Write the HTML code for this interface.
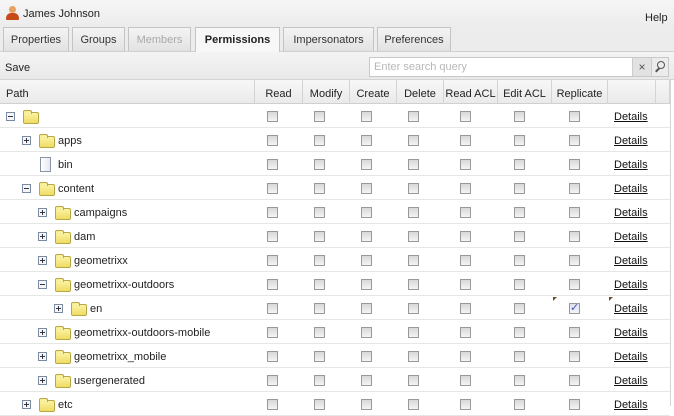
<!DOCTYPE html>
<html><head><meta charset="utf-8">
<style>
*{box-sizing:border-box;margin:0;padding:0}
body{width:674px;height:406px;overflow:hidden;background:#fff;font-family:"Liberation Sans",sans-serif;font-size:11px;color:#222;position:relative}
.a{position:absolute}
#title{left:0;top:0;width:674px;height:27px;background:linear-gradient(#f6f6f6,#ececec)}
#tabs{left:0;top:27px;width:674px;height:25px;background:#ececec;border-bottom:1px solid #cfcfcf}
.tab{position:absolute;top:0;height:24px;border:1px solid #c4c4c4;border-bottom:none;background:linear-gradient(#f4f4f4,#e2e2e2);text-align:center;line-height:24px;font-size:11px;color:#333}
.tab.on{background:#f7f7f7;font-weight:bold;height:25px;color:#222}
#tool{left:0;top:52px;width:674px;height:28px;background:linear-gradient(#f4f4f4,#e9e9e9);border-bottom:1px solid #d4d4d4}
#head{left:0;top:80px;width:670px;height:24px;background:linear-gradient(#f7f7f7,#eaeaea);border-bottom:1px solid #d0d0d0}
.hc{position:absolute;top:0;height:24px;border-left:1px solid #d4d4d4;text-align:center;line-height:28px;font-size:11px}
.row{position:absolute;left:0;width:670px;height:24px;border-bottom:1px solid #e6e6e6}
.cb{position:absolute;top:7px;width:11px;height:11px;border:1px solid #999;background:linear-gradient(#d8d8d8,#f4f4f4)}
.det{position:absolute;left:614px;top:7px;text-decoration:underline;color:#111}
.lbl{position:absolute;top:7px}
.tg{position:absolute;top:8px;width:9px;height:9px;border:1px solid #7a8aa0;background:#f4f6fa}
.tg:before{content:"";position:absolute;left:1px;top:3px;width:5px;height:1px;background:#334}
.tg.p:after{content:"";position:absolute;left:3px;top:1px;width:1px;height:5px;background:#334}
.fd{position:absolute;top:8px;width:16px;height:12px;border:1px solid #b9a646;border-radius:2px;background:linear-gradient(#fbf3a6,#efdc62)}
.fd:before{content:"";position:absolute;left:-1px;top:-3px;width:7px;height:3px;border:1px solid #b9a646;border-bottom:none;border-radius:2px 2px 0 0;background:#f9ef9a}
.fl{position:absolute;top:5px;width:11px;height:15px;border:1px solid #8a93a8;background:linear-gradient(90deg,#fff,#e6e9f0)}
</style></head><body>
<div id="title" class="a">
 <div class="a" style="left:6px;top:6px;width:12px;height:14px">
  <div class="a" style="left:3px;top:0;width:7px;height:7px;border-radius:50%;background:#e8a060"></div>
  <div class="a" style="left:0;top:7px;width:13px;height:7px;border-radius:5px 5px 1px 1px;background:#c84a1a"></div>
 </div>
 <div class="a" style="left:23px;top:8px;font-size:11px">James Johnson</div>
 <div class="a" style="left:645px;top:12px;font-size:11px">Help</div>
</div>
<div id="tabs" class="a">
 <div class="tab" style="left:3px;width:66px">Properties</div>
 <div class="tab" style="left:72px;width:53px">Groups</div>
 <div class="tab" style="left:128px;width:63px;color:#aaa">Members</div>
 <div class="tab on" style="left:195px;width:85px">Permissions</div>
 <div class="tab" style="left:283px;width:91px">Impersonators</div>
 <div class="tab" style="left:377px;width:74px">Preferences</div>
</div>
<div id="tool" class="a">
 <div class="a" style="left:5px;top:10px">Save</div>
 <div class="a" style="left:369px;top:5px;width:300px;height:20px;border:1px solid #c8c8c8;background:#fff"></div>
 <div class="a" style="left:374px;top:9px;color:#b8b8b8">Enter search query</div>
 <div class="a" style="left:632px;top:6px;width:19px;height:18px;background:#e2e2e2;border-left:1px solid #ccc;text-align:center;line-height:18px;color:#555;font-size:12px">×</div>
 <div class="a" style="left:651px;top:6px;width:17px;height:18px;background:#ececec;border-left:1px solid #ccc">
  <div class="a" style="left:5px;top:3px;width:8px;height:8px;border:1.5px solid #555;border-radius:50%"></div>
  <div class="a" style="left:3px;top:11px;width:5px;height:2px;background:#555;transform:rotate(-45deg)"></div>
 </div>
</div>
<div id="head" class="a">
 <div class="a" style="left:6px;top:8px">Path</div>
 <div class="hc" style="left:254px;width:48px">Read</div>
 <div class="hc" style="left:302px;width:47px">Modify</div>
 <div class="hc" style="left:349px;width:47px">Create</div>
 <div class="hc" style="left:396px;width:47px">Delete</div>
 <div class="hc" style="left:443px;width:54px">Read ACL</div>
 <div class="hc" style="left:497px;width:54px">Edit ACL</div>
 <div class="hc" style="left:551px;width:56px">Replicate</div>
 <div class="hc" style="left:607px;width:48px"></div>
 <div class="hc" style="left:655px;width:15px;border-right:1px solid #d4d4d4"></div>
</div>
<div class="a" style="left:670px;top:80px;width:1px;height:326px;background:#d4d4d4"></div>

<div class="row" style="top:104px"><div class="tg" style="left:6px"></div><div class="fd" style="left:23px"></div>
<div class="cb" style="left:267px"></div><div class="cb" style="left:314px"></div><div class="cb" style="left:361px"></div><div class="cb" style="left:408px"></div><div class="cb" style="left:460px"></div><div class="cb" style="left:514px"></div><div class="cb" style="left:569px"></div><div class="det">Details</div></div>

<div class="row" style="top:128px"><div class="tg p" style="left:22px"></div><div class="fd" style="left:39px"></div><div class="lbl" style="left:58px">apps</div>
<div class="cb" style="left:267px"></div><div class="cb" style="left:314px"></div><div class="cb" style="left:361px"></div><div class="cb" style="left:408px"></div><div class="cb" style="left:460px"></div><div class="cb" style="left:514px"></div><div class="cb" style="left:569px"></div><div class="det">Details</div></div>

<div class="row" style="top:152px"><div class="fl" style="left:40px"></div><div class="lbl" style="left:58px">bin</div>
<div class="cb" style="left:267px"></div><div class="cb" style="left:314px"></div><div class="cb" style="left:361px"></div><div class="cb" style="left:408px"></div><div class="cb" style="left:460px"></div><div class="cb" style="left:514px"></div><div class="cb" style="left:569px"></div><div class="det">Details</div></div>

<div class="row" style="top:176px"><div class="tg" style="left:22px"></div><div class="fd" style="left:39px"></div><div class="lbl" style="left:58px">content</div>
<div class="cb" style="left:267px"></div><div class="cb" style="left:314px"></div><div class="cb" style="left:361px"></div><div class="cb" style="left:408px"></div><div class="cb" style="left:460px"></div><div class="cb" style="left:514px"></div><div class="cb" style="left:569px"></div><div class="det">Details</div></div>

<div class="row" style="top:200px"><div class="tg p" style="left:38px"></div><div class="fd" style="left:55px"></div><div class="lbl" style="left:74px">campaigns</div>
<div class="cb" style="left:267px"></div><div class="cb" style="left:314px"></div><div class="cb" style="left:361px"></div><div class="cb" style="left:408px"></div><div class="cb" style="left:460px"></div><div class="cb" style="left:514px"></div><div class="cb" style="left:569px"></div><div class="det">Details</div></div>

<div class="row" style="top:224px"><div class="tg p" style="left:38px"></div><div class="fd" style="left:55px"></div><div class="lbl" style="left:74px">dam</div>
<div class="cb" style="left:267px"></div><div class="cb" style="left:314px"></div><div class="cb" style="left:361px"></div><div class="cb" style="left:408px"></div><div class="cb" style="left:460px"></div><div class="cb" style="left:514px"></div><div class="cb" style="left:569px"></div><div class="det">Details</div></div>

<div class="row" style="top:248px"><div class="tg p" style="left:38px"></div><div class="fd" style="left:55px"></div><div class="lbl" style="left:74px">geometrixx</div>
<div class="cb" style="left:267px"></div><div class="cb" style="left:314px"></div><div class="cb" style="left:361px"></div><div class="cb" style="left:408px"></div><div class="cb" style="left:460px"></div><div class="cb" style="left:514px"></div><div class="cb" style="left:569px"></div><div class="det">Details</div></div>

<div class="row" style="top:272px"><div class="tg" style="left:38px"></div><div class="fd" style="left:55px"></div><div class="lbl" style="left:74px">geometrixx-outdoors</div>
<div class="cb" style="left:267px"></div><div class="cb" style="left:314px"></div><div class="cb" style="left:361px"></div><div class="cb" style="left:408px"></div><div class="cb" style="left:460px"></div><div class="cb" style="left:514px"></div><div class="cb" style="left:569px"></div><div class="det">Details</div></div>

<div class="row" style="top:296px"><div class="tg p" style="left:54px"></div><div class="fd" style="left:71px"></div><div class="lbl" style="left:90px">en</div>
<div class="cb" style="left:267px"></div><div class="cb" style="left:314px"></div><div class="cb" style="left:361px"></div><div class="cb" style="left:408px"></div><div class="cb" style="left:460px"></div><div class="cb" style="left:514px"></div><div class="cb" style="left:569px;background:linear-gradient(#dde0f0,#f4f4fa);color:#4a55a8;font-size:11px;line-height:9px;text-align:center">✓</div>
<div class="a" style="left:553px;top:1px;width:0;height:0;border-top:4px solid #6b5020;border-right:4px solid transparent"></div>
<div class="a" style="left:609px;top:1px;width:0;height:0;border-top:4px solid #6b5020;border-right:4px solid transparent"></div>
<div class="det">Details</div></div>

<div class="row" style="top:320px"><div class="tg p" style="left:38px"></div><div class="fd" style="left:55px"></div><div class="lbl" style="left:74px">geometrixx-outdoors-mobile</div>
<div class="cb" style="left:267px"></div><div class="cb" style="left:314px"></div><div class="cb" style="left:361px"></div><div class="cb" style="left:408px"></div><div class="cb" style="left:460px"></div><div class="cb" style="left:514px"></div><div class="cb" style="left:569px"></div><div class="det">Details</div></div>

<div class="row" style="top:344px"><div class="tg p" style="left:38px"></div><div class="fd" style="left:55px"></div><div class="lbl" style="left:74px">geometrixx_mobile</div>
<div class="cb" style="left:267px"></div><div class="cb" style="left:314px"></div><div class="cb" style="left:361px"></div><div class="cb" style="left:408px"></div><div class="cb" style="left:460px"></div><div class="cb" style="left:514px"></div><div class="cb" style="left:569px"></div><div class="det">Details</div></div>

<div class="row" style="top:368px"><div class="tg p" style="left:38px"></div><div class="fd" style="left:55px"></div><div class="lbl" style="left:74px">usergenerated</div>
<div class="cb" style="left:267px"></div><div class="cb" style="left:314px"></div><div class="cb" style="left:361px"></div><div class="cb" style="left:408px"></div><div class="cb" style="left:460px"></div><div class="cb" style="left:514px"></div><div class="cb" style="left:569px"></div><div class="det">Details</div></div>

<div class="row" style="top:392px"><div class="tg p" style="left:22px"></div><div class="fd" style="left:39px"></div><div class="lbl" style="left:58px">etc</div>
<div class="cb" style="left:267px"></div><div class="cb" style="left:314px"></div><div class="cb" style="left:361px"></div><div class="cb" style="left:408px"></div><div class="cb" style="left:460px"></div><div class="cb" style="left:514px"></div><div class="cb" style="left:569px"></div><div class="det">Details</div></div>
</body></html>
